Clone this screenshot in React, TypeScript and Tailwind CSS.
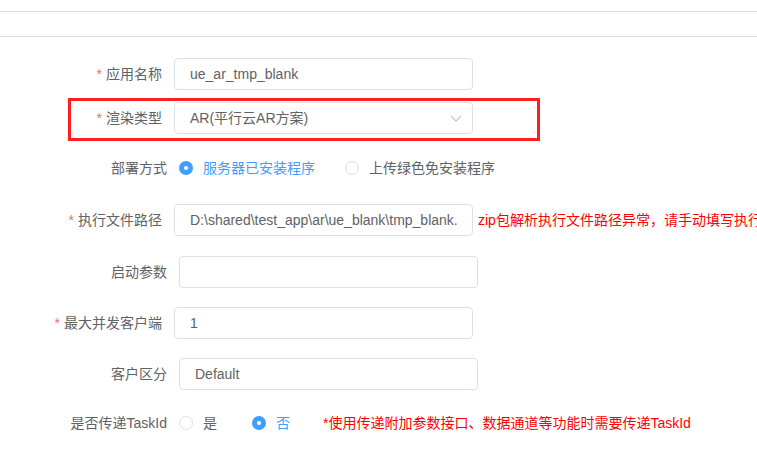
import type { ReactNode } from "react";

const font = { fontFamily: '"Liberation Sans", "Noto Sans CJK SC", sans-serif' };

const Label: React.FC<{ required?: boolean; children: ReactNode }> = ({ required, children }) => (
  <div className={`flex shrink-0 justify-end pr-3 text-sm text-[#606266] ${required ? "w-[174px]" : "w-[179px]"}`}>
    {required && <span className="mr-1 text-[#f56c6c]">*</span>}
    {children}
  </div>
);

const Input: React.FC<{ value?: string }> = ({ value }) => (
  <div className="flex h-8 w-[299px] shrink-0 items-center overflow-hidden whitespace-nowrap rounded border border-[#dcdfe6] px-[15px] text-sm text-[#606266]">
    {value}
  </div>
);

const Radio: React.FC<{ checked?: boolean; children: ReactNode }> = ({ checked, children }) => (
  <div className="flex items-center">
    {checked ? (
      <span className="flex h-[14px] w-[14px] items-center justify-center rounded-full bg-[#409eff]">
        <span className="h-1 w-1 rounded-full bg-white" />
      </span>
    ) : (
      <span className="h-[14px] w-[14px] rounded-full border border-[#dcdfe6] bg-white" />
    )}
    <span className={`pl-[10px] text-sm ${checked ? "text-[#409eff]" : "text-[#606266]"}`}>{children}</span>
  </div>
);

export default function App() {
  return (
    <div className="h-[458px] w-[757px] overflow-hidden bg-white" style={font}>
      <div className="h-[12px] border-b border-[#dcdfe6]" />
      <div className="h-[25px] border-b border-[#dcdfe6]" />

      <div className="flex flex-col">
        {/* 应用名称 */}
        <div className="mt-[21px] flex h-8 items-center">
          <Label required>应用名称</Label>
          <Input value="ue_ar_tmp_blank" />
        </div>

        {/* 渲染类型 */}
        <div className="relative mt-3 flex h-8 items-center">
          <div className="absolute left-[68px] top-[-4px] h-[43px] w-[472px] border-[3px] border-[#ff1f1f]" />
          <Label required>渲染类型</Label>
          <div className="flex h-8 w-[299px] items-center justify-between rounded border border-[#dcdfe6] pl-[15px] pr-[10px] text-sm text-[#606266]">
            <span>AR(平行云AR方案)</span>
            <svg width="12" height="7" viewBox="0 0 12 7" fill="none">
              <path d="M1 1l5 5 5-5" stroke="#c0c4cc" strokeWidth="1.2" />
            </svg>
          </div>
        </div>

        {/* 部署方式 */}
        <div className="mt-[18px] flex h-8 items-center">
          <Label>部署方式</Label>
          <div className="flex items-center gap-[30px]">
            <Radio checked>服务器已安装程序</Radio>
            <Radio>上传绿色免安装程序</Radio>
          </div>
        </div>

        {/* 执行文件路径 */}
        <div className="mt-5 flex h-8 items-center">
          <Label required>执行文件路径</Label>
          <Input value="D:\shared\test_app\ar\ue_blank\tmp_blank." />
          <span className="ml-[5px] whitespace-nowrap text-sm text-[#ff0000]">
            zip包解析执行文件路径异常，请手动填写执行文件路径
          </span>
        </div>

        {/* 启动参数 */}
        <div className="mt-5 flex h-8 items-center">
          <Label>启动参数</Label>
          <Input />
        </div>

        {/* 最大并发客户端 */}
        <div className="mt-[19px] flex h-8 items-center">
          <Label required>最大并发客户端</Label>
          <Input value="1" />
        </div>

        {/* 客户区分 */}
        <div className="mt-[19px] flex h-8 items-center">
          <Label>客户区分</Label>
          <Input value="Default" />
        </div>

        {/* 是否传递TaskId */}
        <div className="mt-[17px] flex h-8 items-center">
          <Label>是否传递TaskId</Label>
          <div className="flex items-center gap-[35px]">
            <Radio>是</Radio>
            <Radio checked>否</Radio>
          </div>
          <span className="ml-[33px] whitespace-nowrap text-sm text-[#ff0000]">
            *使用传递附加参数接口、数据通道等功能时需要传递TaskId
          </span>
        </div>
      </div>
    </div>
  );
}
